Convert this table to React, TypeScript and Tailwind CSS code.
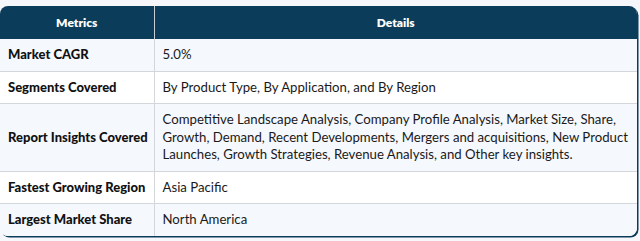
const rows = [
  { metric: "Market CAGR", details: "5.0%" },
  { metric: "Segments Covered", details: "By Product Type, By Application, and By Region" },
  {
    metric: "Report Insights Covered",
    details:
      "Competitive Landscape Analysis, Company Profile Analysis, Market Size, Share, Growth, Demand, Recent Developments, Mergers and acquisitions, New Product Launches, Growth Strategies, Revenue Analysis, and Other key insights.",
  },
  { metric: "Fastest Growing Region", details: "Asia Pacific" },
  { metric: "Largest Market Share", details: "North America" },
];

const App = () => {
  return (
    <div className="min-h-screen bg-[#f6f7fa] pt-[6px] font-['Lato','Liberation_Sans',sans-serif]">
      <div className="w-[637px] overflow-hidden rounded-lg shadow-[1.5px_1.5px_0_#0b3d5b]">
        <table className="w-full border-collapse text-[13.2px] text-[#1a1a1a]">
          <thead>
            <tr className="bg-[#0b3d5b] text-white">
              <th className="w-[154px] py-[8px] leading-[17px] border-r border-[#c9ced6] text-[12px] font-extrabold">
                Metrics
              </th>
              <th className="py-[8px] leading-[17px] text-[12px] font-extrabold">Details</th>
            </tr>
          </thead>
          <tbody>
            {rows.map((row, i) => (
              <tr
                key={row.metric}
                className={`${i % 2 === 0 ? "bg-[#f5f8fd]" : "bg-white"} ${
                  i < rows.length - 1 ? "border-b border-[#d3d6db]" : ""
                }`}
              >
                <td className="border-r border-[#d3d6db] pl-2 py-[7px] leading-[17.5px] font-black text-[13px] text-[#111]">
                  {row.metric}
                </td>
                <td className="px-2 py-[7px] leading-[17.5px]">{row.details}</td>
              </tr>
            ))}
          </tbody>
        </table>
      </div>
    </div>
  );
};

export default App;
